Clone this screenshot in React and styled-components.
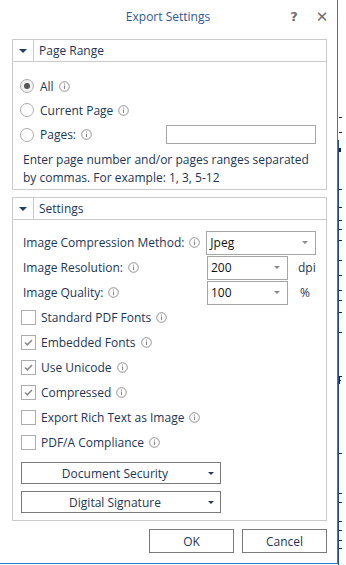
import React from 'react';
import styled, { createGlobalStyle } from 'styled-components';

const GlobalStyle = createGlobalStyle`
  html, body {
    margin: 0;
    padding: 0;
    background: #ffffff;
  }
  body {
    font-family: "Open Sans", "Liberation Sans", sans-serif;
    font-size: 11px;
    color: #1c3657;
  }
`;

const Screen = styled.div`
  display: flex;
  width: 346px;
  height: 565px;
  overflow: hidden;
`;

const Dialog = styled.div`
  box-sizing: border-box;
  width: 338px;
  height: 564px;
  border-right: 1px solid #2a7fd0;
  border-bottom: 1px solid #2a7fd0;
  background: #ffffff;
  padding: 0 10px 0 12px;
  display: flex;
  flex-direction: column;
`;

const BackStrip = styled.div`
  flex: 1;
  height: 565px;
`;

const TitleBar = styled.div`
  height: 33px;
  display: flex;
  align-items: center;
`;

const Title = styled.div`
  flex: 1;
  text-align: center;
  font-size: 12px;
  color: #2f5796;
  padding-left: 42px;
`;

const TitleButton = styled.div`
  width: 20px;
  text-align: center;
  color: #6e6e6e;
  font-family: "DejaVu Sans", sans-serif;
  font-weight: bold;
  font-size: ${(p) => p.$size || 13}px;
  margin-left: ${(p) => p.$gap || 0}px;
  margin-right: ${(p) => p.$right || 0}px;
`;

const Group = styled.div`
  border: 1px solid #cbcbcb;
  margin-top: ${(p) => p.$top || 0}px;
`;

const GroupHeader = styled.div`
  display: flex;
  height: 21px;
  border-bottom: 1px solid #cbcbcb;
`;

const Toggle = styled.div`
  width: 20px;
  border-right: 1px solid #cbcbcb;
  display: flex;
  align-items: center;
  justify-content: center;
`;

const GroupTitle = styled.div`
  display: flex;
  align-items: center;
  padding-left: 5px;
  font-size: 12px;
`;

const GroupBody = styled.div`
  padding: ${(p) => p.$pad};
`;

const Row = styled.div`
  display: flex;
  align-items: center;
  height: ${(p) => p.$h || 25}px;
`;

const Radio = styled.div`
  box-sizing: border-box;
  width: 14px;
  height: 14px;
  border-radius: 50%;
  border: 1px solid #acacac;
  background: ${(p) => (p.$checked ? '#f1f1f1' : '#ffffff')};
  display: flex;
  align-items: center;
  justify-content: center;
  margin-right: 6px;
  &::after {
    content: '';
    width: 6px;
    height: 6px;
    border-radius: 50%;
    background: #555555;
    display: ${(p) => (p.$checked ? 'block' : 'none')};
  }
`;

const Check = styled.div`
  box-sizing: border-box;
  width: 15px;
  height: 15px;
  border: 1px solid #acacac;
  background: #ffffff;
  display: flex;
  align-items: center;
  justify-content: center;
  margin-right: 5px;
`;

const Label = styled.span`
  display: inline-flex;
  align-items: center;
  font-size: 12px;
  white-space: nowrap;
`;

const RangeInput = styled.div`
  box-sizing: border-box;
  width: 150px;
  height: 19px;
  border: 1px solid #a6a6a6;
  margin-left: auto;
`;

const Help = styled.div`
  font-size: 12px;
  line-height: 18px;
  margin-top: 4px;
  padding-left: 3px;
`;

const FieldLabel = styled.div`
  width: 184px;
  padding-left: 2px;
  display: flex;
  align-items: center;
  font-size: 12px;
`;

const Select = styled.div`
  box-sizing: border-box;
  width: ${(p) => p.$w}px;
  height: 24px;
  border: 1px solid #a6a6a6;
  display: flex;
  align-items: center;
  padding: 0 7px 0 3px;
  font-size: 12px;
  color: #111111;
  justify-content: space-between;
`;

const Unit = styled.div`
  margin-left: ${(p) => p.$gap}px;
  font-size: 12px;
`;

const DropButton = styled.div`
  box-sizing: border-box;
  width: 200px;
  height: 22px;
  border: 1px solid #7a7a7a;
  display: flex;
  align-items: center;
  padding: 0 6px 0 0;
  font-size: 12px;
  margin-top: ${(p) => p.$top}px;
`;

const DropText = styled.span`
  flex: 1;
  text-align: center;
`;

const Footer = styled.div`
  display: flex;
  justify-content: flex-end;
  gap: 8px;
  margin-top: 8px;
`;

const Button = styled.div`
  box-sizing: border-box;
  width: 85px;
  height: 24px;
  border: 1px solid #7a7a7a;
  display: flex;
  align-items: center;
  justify-content: center;
  font-size: 12px;
`;

const Info = () => (
  <svg width="11" height="11" viewBox="0 0 11 11" style={{ marginLeft: 5 }}>
    <circle cx="5.5" cy="5.5" r="4.8" fill="none" stroke="#858585" strokeWidth="0.9" />
    <rect x="5" y="4.5" width="1" height="3.6" fill="#858585" />
    <rect x="5" y="2.6" width="1" height="1" fill="#858585" />
  </svg>
);

const DownTri = ({ color = '#1f3c66', w = 8, h = 4 }) => (
  <svg width={w} height={h} viewBox={`0 0 ${w} ${h}`}>
    <polygon points={`0,0 ${w},0 ${w / 2},${h}`} fill={color} />
  </svg>
);

const Tick = () => (
  <svg width="11" height="9" viewBox="0 0 11 9">
    <polyline points="2,4.5 4.3,6.8 9,2" fill="none" stroke="#8a8a8a" strokeWidth="1.6" />
  </svg>
);

const ticks = [117, 132, 189, 207, 220, 229, 240, 260, 275, 290, 300, 312, 332, 453, 493, 502, 521, 530, 540, 548];

const Strip = () => (
  <svg width="8" height="565" viewBox="0 0 8 565">
    <rect x="0" y="140" width="1" height="425" fill="#1f4f8a" />
    {ticks.map((y) => (
      <rect key={y} x="1" y={y} width="3" height="1" fill="#222" />
    ))}
    <rect x="1" y="148" width="2" height="4" fill="#222" />
    <rect x="1" y="376" width="1" height="8" fill="#222" />
    <rect x="1" y="376" width="3" height="1" fill="#222" />
    <rect x="1" y="380" width="2" height="1" fill="#222" />
  </svg>
);

const checks = [
  ['Standard PDF Fonts', false],
  ['Embedded Fonts', true],
  ['Use Unicode', true],
  ['Compressed', true],
  ['Export Rich Text as Image', false],
  ['PDF/A Compliance', false],
];

const App = () => {
  return (
    <>
      <GlobalStyle />
      <Screen>
        <Dialog>
          <TitleBar>
            <Title>Export Settings</Title>
            <TitleButton $gap={2}>?</TitleButton>
            <TitleButton $gap={8} $right={-5} $size={15}>✕</TitleButton>
          </TitleBar>

          <Group $top={6}>
            <GroupHeader>
              <Toggle><DownTri /></Toggle>
              <GroupTitle>Page Range</GroupTitle>
            </GroupHeader>
            <GroupBody $pad="12px 10px 2px 7px">
              <Row $h={24}>
                <Radio $checked />
                <Label>All<Info /></Label>
              </Row>
              <Row $h={24}>
                <Radio />
                <Label>Current Page<Info /></Label>
              </Row>
              <Row $h={25}>
                <Radio />
                <Label>Pages:<Info /></Label>
                <RangeInput />
              </Row>
              <Help>
                Enter page number and/or pages ranges separated
                <br />
                by commas. For example: 1, 3, 5-12
              </Help>
            </GroupBody>
          </Group>

          <Group $top={7}>
            <GroupHeader>
              <Toggle><DownTri /></Toggle>
              <GroupTitle>Settings</GroupTitle>
            </GroupHeader>
            <GroupBody $pad="10px 10px 7px 8px">
              <Row>
                <FieldLabel>Image Compression Method:<Info /></FieldLabel>
                <Select $w={110}>Jpeg<DownTri color="#8a8a8a" w={6} h={3} /></Select>
              </Row>
              <Row>
                <FieldLabel>Image Resolution:<Info /></FieldLabel>
                <Select $w={81}>200<DownTri color="#8a8a8a" w={6} h={3} /></Select>
                <Unit $gap={10}>dpi</Unit>
              </Row>
              <Row>
                <FieldLabel>Image Quality:<Info /></FieldLabel>
                <Select $w={81}>100<DownTri color="#8a8a8a" w={6} h={3} /></Select>
                <Unit $gap={12}>%</Unit>
              </Row>
              {checks.map(([text, on]) => (
                <Row key={text}>
                  <Check>{on && <Tick />}</Check>
                  <Label>{text}<Info /></Label>
                </Row>
              ))}
              <DropButton $top={7}>
                <DropText>Document Security</DropText>
                <DownTri color="#1f3c66" w={6} h={3} />
              </DropButton>
              <DropButton $top={7}>
                <DropText>Digital Signature</DropText>
                <DownTri color="#1f3c66" w={6} h={3} />
              </DropButton>
            </GroupBody>
          </Group>

          <Footer>
            <Button>OK</Button>
            <Button>Cancel</Button>
          </Footer>
        </Dialog>
        <BackStrip>
          <Strip />
        </BackStrip>
      </Screen>
    </>
  );
};

export default App;
